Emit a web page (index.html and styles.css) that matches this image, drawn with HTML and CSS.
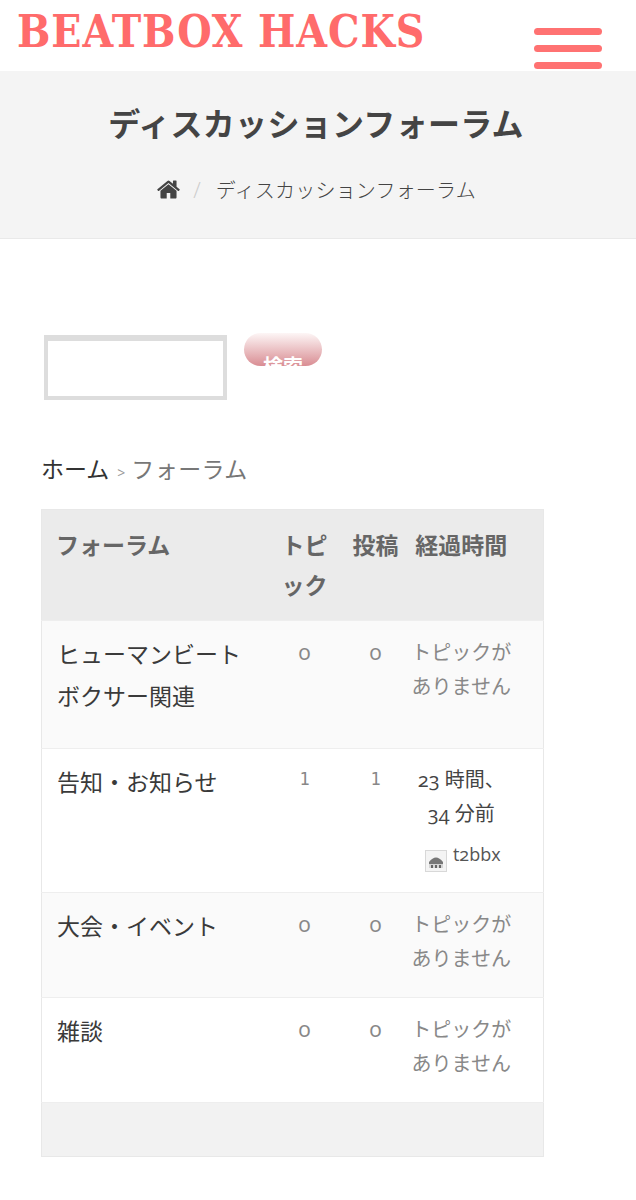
FILE: index.html
```html
<!DOCTYPE html>
<html lang="ja">
<head>
  <meta charset="UTF-8">
  <meta name="viewport" content="width=device-width, initial-scale=1.0">
  <title>ディスカッションフォーラム</title>
  <link rel="stylesheet" href="styles.css">
</head>
<body>
  <header class="site-header">
    <a class="logo" href="#">BEATBOX HACKS</a>
    <button class="menu-toggle" aria-label="menu">
      <span></span><span></span><span></span>
    </button>
  </header>

  <section class="page-title">
    <h1>ディスカッションフォーラム</h1>
    <div class="crumbs">
      <svg class="home-icon" viewBox="0 0 1792 1792"><path d="M1472 992v480q0 26-19 45t-45 19h-384v-384h-256v384h-384q-26 0-45-19t-19-45v-480q0-1 .5-3t.5-3l575-474 575 474q1 2 1 6zm223-69l-62 74q-8 9-21 11h-3q-13 0-21-7l-692-577-692 577q-12 8-24 7-13-2-21-11l-62-74q-8-10-7-23.500t11-21.500l719-599q32-26 76-26t76 26l244 204v-195q0-14 9-23t23-9h192q14 0 23 9t9 23v408l219 182q10 8 11 21.500t-7 23.500z"/></svg>
      <span class="crumb-sep">/</span>
      <span>ディスカッションフォーラム</span>
    </div>
  </section>

  <main class="content">
    <form class="search">
      <input class="search-input" type="text">
      <button class="search-btn" type="button">検索</button>
    </form>

    <div class="forum-path">
      <a href="#">ホーム</a><span class="path-sep">&gt;</span><span class="path-current">フォーラム</span>
    </div>

    <table class="forums">
      <colgroup>
        <col class="col-forum"><col class="col-topics"><col class="col-posts"><col>
      </colgroup>
      <thead>
        <tr>
          <th class="forum-name">フォーラム</th>
          <th>トピック</th>
          <th class="center">投稿</th>
          <th class="center">経過時間</th>
        </tr>
      </thead>
      <tbody>
        <tr>
          <td class="forum-name">ヒューマンビート<br>ボクサー関連</td>
          <td class="count">0</td>
          <td class="count">0</td>
          <td class="fresh">トピックがありません</td>
        </tr>
        <tr>
          <td class="forum-name">告知・お知らせ</td>
          <td class="count num-one">1</td>
          <td class="count num-one">1</td>
          <td class="fresh fresh-active">
            23 時間、<br>34 分前
            <div class="author">
              <svg class="avatar" viewBox="0 0 22 22">
                <rect x=".5" y=".5" width="21" height="21" fill="#f4f4f4" stroke="#d8d8d8"/>
                <path d="M4 12q7-9 14 0v2H4z" fill="#777"/>
                <path d="M4 14h14v4H4z" fill="#d4d4d4"/>
                <path d="M6 15h2v3H6zM10 15h2v3h-2zM14 15h2v3h-2z" fill="#666"/>
              </svg>
              <span>t2bbx</span>
            </div>
          </td>
        </tr>
        <tr>
          <td class="forum-name">大会・イベント</td>
          <td class="count">0</td>
          <td class="count">0</td>
          <td class="fresh">トピックがありません</td>
        </tr>
        <tr>
          <td class="forum-name">雑談</td>
          <td class="count">0</td>
          <td class="count">0</td>
          <td class="fresh">トピックがありません</td>
        </tr>
      </tbody>
      <tfoot>
        <tr><td colspan="4"></td></tr>
      </tfoot>
    </table>
  </main>
</body>
</html>
```

FILE: styles.css
```css
/* Reset */
* {
  margin: 0;
  padding: 0;
  box-sizing: border-box;
}
body {
  font-family: "Open Sans", "Noto Sans CJK JP", sans-serif;
  background: #fff;
  color: #333;
}
a {
  color: inherit;
  text-decoration: none;
}

/* Header */
.site-header {
  height: 71px;
  display: flex;
  justify-content: space-between;
  align-items: flex-start;
  padding: 0 34px 0 17px;
}
.logo {
  font-family: "DejaVu Serif Condensed", "DejaVu Serif", serif;
  font-stretch: condensed;
  font-weight: bold;
  font-size: 44px;
  line-height: 64px;
  letter-spacing: .9px;
  color: #ff6b6b;
}
.menu-toggle {
  position: relative;
  width: 68px;
  margin-top: 28px;
  display: flex;
  flex-direction: column;
  gap: 10px;
  border: none;
  background: none;
}
.menu-toggle span {
  height: 7px;
  border-radius: 4px;
  background: #ff7272;
}

/* Page title */
.page-title {
  height: 168px;
  background: #f4f4f4;
  border-bottom: 1px solid #e9e9e9;
  text-align: center;
  padding-top: 30px;
}
.page-title h1 {
  font-size: 32px;
  line-height: 46px;
  font-weight: bold;
  letter-spacing: .3px;
  padding-right: 4px;
  color: #444;
}
.crumbs {
  margin-top: 27px;
  padding-right: 4px;
  display: flex;
  justify-content: center;
  align-items: center;
  height: 30px;
  font-size: 20px;
  font-weight: 300;
  letter-spacing: .2px;
  color: #444;
}
.home-icon {
  width: 25px;
  height: 25px;
  fill: #444;
}
.crumb-sep {
  margin: 0 15px 0 12px;
  color: #ccc;
  font-size: 22px;
}

/* Search */
.content {
  padding: 94px 0 0 41px;
}
.search {
  display: flex;
  align-items: flex-start;
  gap: 17px;
  margin-left: 3px;
}
.search-input {
  width: 183px;
  height: 65px;
  margin-top: 2px;
  border: 4px solid #ddd;
  border-top-width: 6px;
  background: #fff;
}
.search-btn {
  width: 78px;
  height: 33px;
  overflow: hidden;
  border: none;
  border-radius: 17px;
  padding-top: 20px;
  background: linear-gradient(#fdf6f6, #d98d93);
  color: #fff;
  font-family: inherit;
  font-size: 20px;
  font-weight: bold;
  line-height: 28px;
}

/* Forum path */
.forum-path {
  margin-top: 52px;
  font-size: 23px;
  line-height: 34px;
}
.path-sep {
  margin: 0 6px 0 8px;
  font-size: 14px;
  color: #999;
}
.path-current {
  letter-spacing: .4px;
  color: #777;
}

/* Forum table */
.forums {
  margin-top: 19px;
  width: 503px;
  table-layout: fixed;
  border-collapse: collapse;
  border: 1px solid #e8e8e8;
}
.col-forum {
  width: 226px;
}
.col-topics {
  width: 74px;
}
.col-posts {
  width: 68px;
}
.forums th {
  background: #ebebeb;
  color: #666;
  font-size: 23px;
  line-height: 40px;
  font-weight: bold;
  text-align: left;
  vertical-align: top;
  padding: 15px 0 15px 14px;
}
.forums th.center {
  text-align: center;
  padding: 15px 30px 15px 0;
}
.forums th:nth-child(3) {
  padding-right: 0;
}
.forums td {
  vertical-align: top;
  border-top: 1px solid #eee;
  padding-top: 13px;
}
.forums tbody tr:nth-child(odd) td {
  background: #fafafa;
}
.forums td.forum-name {
  font-size: 23px;
  line-height: 42px;
  padding: 12px 0 31px 15px;
  color: #3a3a3a;
}
td.count {
  font-size: 22px;
  line-height: 34px;
  text-align: center;
  color: #888;
  font-variant-numeric: oldstyle-nums;
}
td.num-one {
  font-family: "DejaVu Sans Mono", monospace;
  font-size: 17px;
}
.forums td.fresh {
  font-size: 20px;
  line-height: 34px;
  text-align: center;
  color: #888;
  padding-top: 15px;
  padding-right: 30px;
  padding-bottom: 21px;
}
.forums td.fresh-active {
  color: #444;
  font-variant-numeric: oldstyle-nums;
  padding-top: 14px;
  padding-bottom: 20px;
}
.author {
  margin-top: 11px;
  display: flex;
  justify-content: center;
  align-items: flex-start;
  gap: 6px;
  padding-left: 3px;
  line-height: 24px;
  color: #555;
  font-size: 18px;
}
.avatar {
  width: 22px;
  height: 22px;
  margin-top: 8px;
}
.forums tfoot td {
  height: 54px;
  padding: 0;
  background: #f2f2f2;
}
```
